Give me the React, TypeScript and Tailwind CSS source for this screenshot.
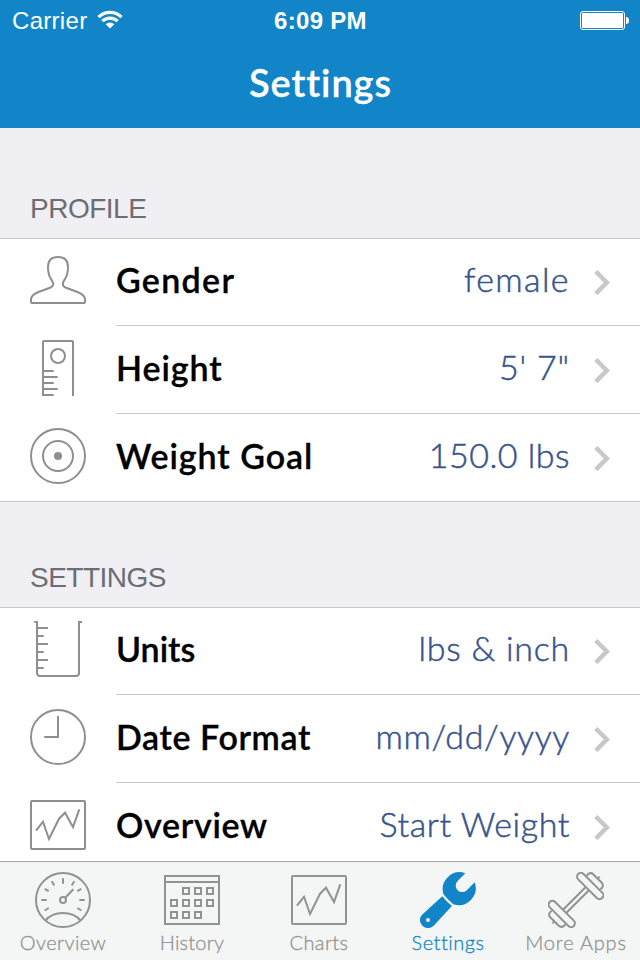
import type { ReactNode } from "react";

const CHART_LINE = "6,33.7 13,24.7 19,42 29,21.7 35,15.7 43,30 49.3,12.3";

function Icon({ children }: { children: ReactNode }) {
  return (
    <svg viewBox="0 0 56 56" className="w-14 h-14 shrink-0" fill="none" stroke="currentColor" strokeWidth="2">
      {children}
    </svg>
  );
}

const PersonIcon = () => (
  <Icon>
    <path d="M28 5C21.5 5 18 8.5 18 15C18 19 18.6 23 20.7 26.5C22 28.7 23.2 30 23.2 32C23.2 34 22 35 20 35.8L8.5 40C3.5 42 1 44 1 47.5V50Q1 51 2 51H54Q55 51 55 50V47.5C55 44 52.5 42 47.5 40L36 35.8C34 35 32.8 34 32.8 32C32.8 30 34 28.7 35.3 26.5C37.4 23 38 19 38 15C38 8.5 34.5 5 28 5Z" />
  </Icon>
);

const RulerIcon = () => (
  <Icon>
    <path d="M13 56V2Q13 1 14 1H42Q43 1 43 2V56" />
    <circle cx="28" cy="16" r="7" />
    <path d="M13 31H23.7M13 37H27.7M13 43H23.7M13 49H27.7M13 55H23.7" />
  </Icon>
);

const TargetIcon = () => (
  <Icon>
    <circle cx="28" cy="28" r="27" />
    <circle cx="28" cy="28" r="15" />
    <circle cx="28" cy="28" r="4" fill="currentColor" stroke="none" />
  </Icon>
);

const BeakerIcon = () => (
  <Icon>
    <path d="M4.3 1H7V52Q7 55 10 55H46Q49 55 49 52V1H52" />
    <path d="M7 7H18M7 15H13.7M7 23H18M7 31H13.7M7 39H18M7 47H13.7" />
  </Icon>
);

const ClockIcon = () => (
  <Icon>
    <circle cx="28" cy="28" r="27" />
    <path d="M28 7V28H14.3" />
  </Icon>
);

const ChartIcon = () => (
  <Icon>
    <rect x="1" y="4" width="54" height="48" rx="1" />
    <polyline points={CHART_LINE} />
  </Icon>
);

const GaugeIcon = () => (
  <Icon>
    <circle cx="28" cy="28" r="27" />
    <circle cx="28" cy="28" r="3" />
    <path d="M30.2 25.8L38.3 17.3M10 48.8C19 38.4 37 38.4 46 48.8" />
    <path d="M28 6.3V11.7M16.7 9.3L19.3 13.5M39.3 9.3L36.7 13.5M9.7 16.8L13.7 19.2M46.3 16.8L42.3 19.2M6.3 28H11.7M49.7 28H44.3M9.7 38.5L13.7 36M46.3 38.5L42.3 36" />
  </Icon>
);

const CALENDAR_CELLS = [
  [18, 12], [30, 12], [42, 12],
  [6, 24], [18, 24], [30, 24], [42, 24],
  [6, 36], [18, 36], [30, 36],
];

const CalendarIcon = () => (
  <Icon>
    <rect x="1" y="4" width="54" height="48" />
    <path d="M1 10H55" />
    {CALENDAR_CELLS.map(([x, y]) => (
      <rect key={`${x}-${y}`} x={x + 1} y={y + 4} width="6" height="6" />
    ))}
  </Icon>
);

const WrenchIcon = () => (
  <Icon>
    <g fill="currentColor" stroke="none">
      <path d="M45.3 1.2A17 17 0 0 0 23.6 22.6Q28 28 33.3 32.2A17 17 0 0 0 54.7 10.3L46.8 18.2A6 6 0 1 1 37.6 9Z" />
      <path fillRule="evenodd" d="M22.3 24.2L2.3 42.4A8 8 0 1 0 13.7 53.7L31.9 34Q26.5 29.5 22.3 24.2ZM8 46A2 2 0 1 1 8 50A2 2 0 1 1 8 46Z" />
    </g>
  </Icon>
);

// One end of the barbell, the other end is the same shape turned by 180 degrees
const Plates = () => (
  <>
    <rect x="-17" y="-3.8" width="34" height="7.6" rx="3.8" transform="translate(42.2 14) rotate(45)" />
    <path d="M38.8 3.7C40 1.2 43 0.2 45.2 2.2L53.8 10.8C55.8 13 54.8 16 52.3 17.2" />
    <path d="M49.6 6.6L51.6 4.6" />
  </>
);

const DumbbellIcon = () => (
  <Icon>
    <path d="M37.8 15L15 37.8M41 18.2L18.2 41" />
    <Plates />
    <g transform="rotate(180 28 28)">
      <Plates />
    </g>
  </Icon>
);

const PROFILE = [
  { label: "Gender", value: "female", icon: <PersonIcon />, labelCls: "tracking-[1.3px]", valueCls: "tracking-[1.4px]" },
  { label: "Height", value: "5' 7\"", icon: <RulerIcon />, labelCls: "tracking-[0.9px]", valueCls: "tracking-[0.8px]" },
  { label: "Weight Goal", value: "150.0 lbs", icon: <TargetIcon />, labelCls: "tracking-[0.95px]", valueCls: "tracking-[0.5px]" },
];

const SETTINGS = [
  { label: "Units", value: "lbs & inch", icon: <BeakerIcon />, labelCls: "tracking-[0px]", valueCls: "tracking-[0.75px]" },
  { label: "Date Format", value: "mm/dd/yyyy", icon: <ClockIcon />, labelCls: "tracking-[0.6px]", valueCls: "tracking-[0.6px]" },
  { label: "Overview", value: "Start Weight", icon: <ChartIcon />, labelCls: "tracking-[0.7px]", valueCls: "tracking-[0.6px]" },
];

const TABS = [
  { label: "Overview", icon: <GaugeIcon />, cls: "tracking-[0.4px]", shift: "pr-[2px]" },
  { label: "History", icon: <CalendarIcon />, cls: "tracking-[0.2px]", shift: "" },
  { label: "Charts", icon: <ChartIcon />, cls: "tracking-[0.4px]", shift: "pr-[2px]" },
  { label: "Settings", icon: <WrenchIcon />, cls: "tracking-[0.5px]", shift: "", active: true },
  { label: "More Apps", icon: <DumbbellIcon />, cls: "tracking-[0.8px]", shift: "" },
];

function Section({ rows }: { rows: typeof PROFILE }) {
  return (
    <div className="bg-white border-y border-[#c8c7cc]">
      {rows.map((r, i) => {
        const first = i === 0;
        const last = i === rows.length - 1;
        return (
          <div key={r.label} className={`flex pl-[30px] ${first || last ? "h-[87px]" : "h-[88px]"}`}>
            <div className={`text-[#8e8e93] ${first ? "pt-[13px]" : "pt-[14px]"}`}>{r.icon}</div>
            <div className={`ml-[30px] flex-1 flex items-center pr-[30px] whitespace-nowrap ${first ? "pb-px" : ""} ${last ? "" : "border-b border-[#c8c7cc]"}`}>
              <span className={`pb-1 text-[34px] font-semibold text-black leading-[40px] [-webkit-text-stroke:0.3px_black] ${r.labelCls}`}>{r.label}</span>
              <span className={`ml-auto pb-[5px] text-[34px] font-light text-[#38548b] leading-[40px] [-webkit-text-stroke:0.5px_#38548b] ${r.valueCls}`}>{r.value}</span>
              <svg viewBox="0 0 16 26" className="w-4 h-[26px] ml-6 shrink-0" fill="none" stroke="#c7c7cc" strokeWidth="4.5">
                <path d="M1.8 2.5L12.8 13.5L1.8 24.5" />
              </svg>
            </div>
          </div>
        );
      })}
    </div>
  );
}

export default function App() {
  return (
    <div className="w-[640px] h-[960px] overflow-hidden flex flex-col bg-[#efeff4] font-['Lato',sans-serif]">
      {/* Status bar + title */}
      <header className="h-32 shrink-0 bg-[#1185c8] text-white">
        <div className="h-10 grid grid-cols-3 items-center pl-3 pr-[11px] pt-px text-[24px] leading-[40px] font-['Liberation_Sans',sans-serif]">
          <div className="flex items-center gap-[10px]">
            <span className="tracking-[0.3px]">Carrier</span>
            <svg viewBox="0 0 26 19" className="w-[26px] h-[19px] mb-[3px]" fill="none" stroke="white" strokeWidth="3.2">
              <path d="M1.5 7.2A16.3 16.3 0 0 1 24.5 7.2" />
              <path d="M5.3 11.2A11 11 0 0 1 20.7 11.2" />
              <path d="M13 18.5L8.7 14.2A6.2 6.2 0 0 1 17.3 14.2Z" fill="white" stroke="none" />
            </svg>
          </div>
          <div className="text-center font-bold tracking-[0.3px]">6:09 PM</div>
          <svg viewBox="0 0 49 19" className="w-[49px] h-[19px] mb-px justify-self-end">
            <rect x="0.5" y="0.5" width="44" height="18" rx="2.5" fill="none" stroke="white" />
            <rect x="2" y="2" width="41" height="15" rx="1" fill="white" />
            <path d="M46 6Q49 6 49 9.5Q49 13 46 13Z" fill="white" />
          </svg>
        </div>
        <h1 className="h-[88px] pl-px text-center text-[38px] font-semibold leading-[84px] tracking-[0.9px] [-webkit-text-stroke:0.3px_white]">Settings</h1>
      </header>

      {/* Grouped list, runs on below the tab bar */}
      <main className="flex-1 min-h-0 overflow-hidden">
        <h2 className="h-[110px] pt-[65px] pl-[30px] text-[28px] leading-[32px] tracking-[-0.5px] text-[#6d6d72] font-['Liberation_Sans',sans-serif]">PROFILE</h2>
        <Section rows={PROFILE} />
        <h2 className="h-[105px] pt-[60px] pl-[30px] text-[28px] leading-[32px] tracking-[-0.5px] text-[#6d6d72] font-['Liberation_Sans',sans-serif]">SETTINGS</h2>
        <Section rows={SETTINGS} />
      </main>

      {/* Tab bar */}
      <nav className="h-[99px] shrink-0 border-t border-[#a7a8a8] bg-[#f4f6f5] grid grid-cols-5">
        {TABS.map((t) => (
          <div key={t.label} className={`flex flex-col items-center pt-[10px] whitespace-nowrap ${t.shift} ${t.active ? "text-[#1185c8]" : "text-[#929292]"}`}>
            {t.icon}
            <span className={`text-[20px] font-light leading-[28px] [-webkit-text-stroke:0.3px_currentColor] ${t.cls}`}>{t.label}</span>
          </div>
        ))}
      </nav>
    </div>
  );
}
